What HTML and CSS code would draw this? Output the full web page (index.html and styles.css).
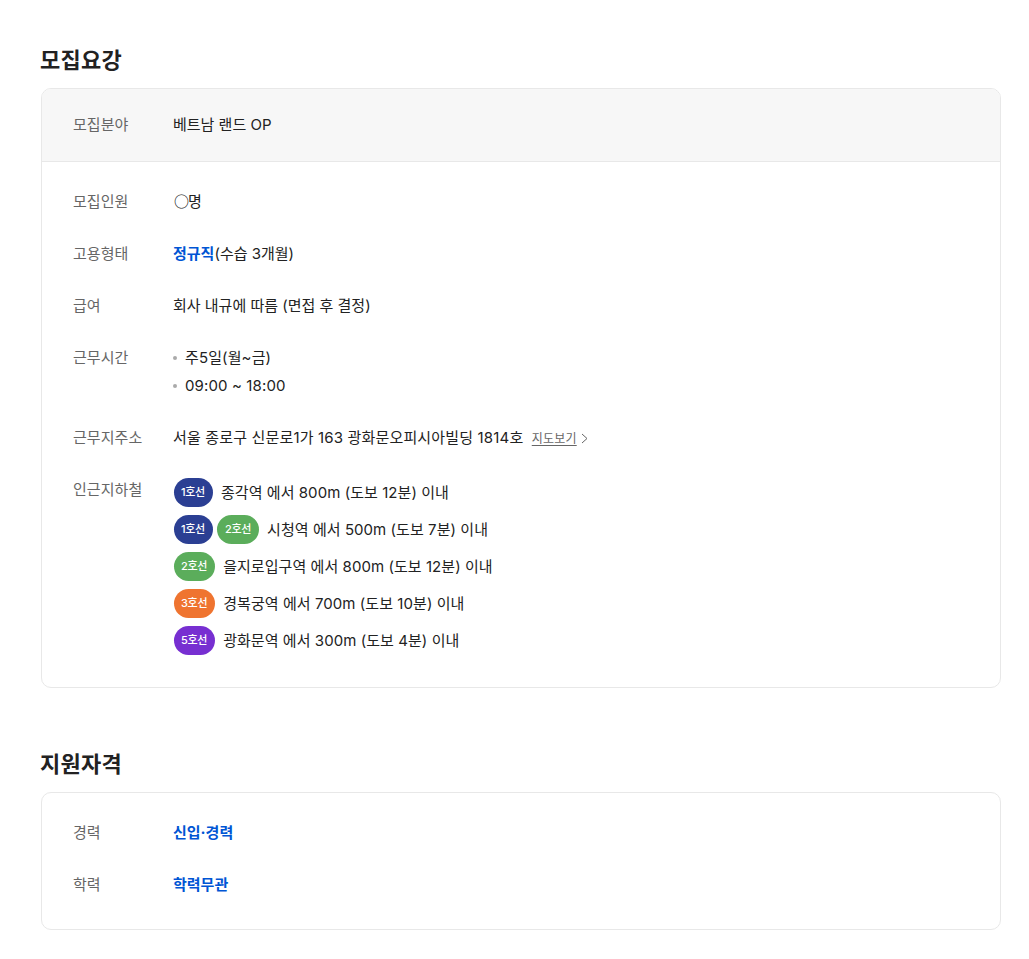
FILE: index.html
```html
<!DOCTYPE html>
<html lang="ko">
<head>
<meta charset="utf-8">
<title>모집요강</title>
<link rel="stylesheet" href="styles.css">
</head>
<body>
<main class="page">
  <section class="section">
    <h2 class="title">모집요강</h2>
    <div class="card">
      <dl class="head">
        <div class="row"><dt class="label">모집분야</dt><dd class="value">베트남 랜드 OP</dd></div>
      </dl>
      <dl class="body">
        <div class="row"><dt class="label">모집인원</dt><dd class="value"><span class="circle">○</span>명</dd></div>
        <div class="row"><dt class="label">고용형태</dt><dd class="value"><strong class="accent">정규직</strong>(수습 3개월)</dd></div>
        <div class="row"><dt class="label">급여</dt><dd class="value">회사 내규에 따름 (면접 후 결정)</dd></div>
        <div class="row"><dt class="label">근무시간</dt>
          <dd class="value">
            <ul class="bullets"><li>주5일(월~금)</li><li>09:00 ~ 18:00</li></ul>
          </dd>
        </div>
        <div class="row"><dt class="label">근무지주소</dt>
          <dd class="value addr">서울 종로구 신문로1가 163 광화문오피시아빌딩 1814호
            <a class="map" href="#"><span class="map-text">지도보기</span><svg class="chev" width="7" height="11" viewBox="0 0 7 11"><path d="M1 1l5 4.5L1 10" fill="none" stroke="#666" stroke-width="1"/></svg></a>
          </dd>
        </div>
        <div class="row"><dt class="label">인근지하철</dt>
          <dd class="value subways">
            <div class="sub"><span class="line l1">1호선</span><span class="st">종각역 에서 800m (도보 12분) 이내</span></div>
            <div class="sub"><span class="line l1">1호선</span><span class="line l2">2호선</span><span class="st">시청역 에서 500m (도보 7분) 이내</span></div>
            <div class="sub"><span class="line l2">2호선</span><span class="st">을지로입구역 에서 800m (도보 12분) 이내</span></div>
            <div class="sub"><span class="line l3">3호선</span><span class="st">경복궁역 에서 700m (도보 10분) 이내</span></div>
            <div class="sub"><span class="line l5">5호선</span><span class="st">광화문역 에서 300m (도보 4분) 이내</span></div>
          </dd>
        </div>
      </dl>
    </div>
  </section>
  <section class="section">
    <h2 class="title">지원자격</h2>
    <div class="card">
      <dl class="body">
        <div class="row"><dt class="label">경력</dt><dd class="value"><strong class="accent">신입·경력</strong></dd></div>
        <div class="row"><dt class="label">학력</dt><dd class="value"><strong class="accent">학력무관</strong></dd></div>
      </dl>
    </div>
  </section>
</main>
</body>
</html>
```
FILE: styles.css
```css
* { box-sizing: border-box; }
html, body { margin: 0; padding: 0; background: #fff; }
body {
  font-family: "Inter", "Noto Sans CJK KR", sans-serif;
  color: #222;
  font-size: 15px;
  line-height: 28px;
  letter-spacing: 0;
}
.page { padding: 43px 28px 29px 41px; display: flex; flex-direction: column; gap: 59px; }
.title {
  margin: 0 0 10px -1px;
  font-size: 22px;
  line-height: 35px;
  font-weight: 700;
  color: #222;
  letter-spacing: 0.25px;
}
.card { border: 1px solid #e8e8e8; border-radius: 10px; overflow: hidden; }
dl, dd, dt, ul { margin: 0; padding: 0; }
.head { background: #f7f7f7; border-bottom: 1px solid #e8e8e8; padding: 22px 31px; }
.body { padding: 26px 31px 30px; display: flex; flex-direction: column; gap: 24px; }
.row { display: flex; }
.label { width: 100px; flex: none; color: #666; letter-spacing: 0.05px; }
.value { flex: 1; min-width: 0; }
.accent { color: #0055d4; font-weight: 700; }
.circle { font-family: "Noto Sans CJK KR", sans-serif; font-weight: 500; line-height: 1; margin-left: 1px; letter-spacing: -0.9px; }
.bullets { list-style: none; letter-spacing: 0.12px; }
.bullets li { position: relative; padding-left: 12px; }
.bullets li::before {
  content: ""; position: absolute; left: 0; top: 12px;
  width: 4px; height: 4px; border-radius: 50%; background: #aaa;
}
.addr { letter-spacing: 0.16px; }
.map { margin-left: 4px; color: #666; font-size: 12px; line-height: 1; text-decoration: none; letter-spacing: 0.2px; }
.map-text { text-decoration: underline; text-underline-offset: 2px; }
.chev { margin-left: 4px; vertical-align: -1px; }
.subways { display: flex; flex-direction: column; gap: 8px; padding: 2px 0 2px 1px; }
.sub { display: flex; align-items: center; height: 29px; }
.line {
  height: 29px; border-radius: 15px; color: #fff; font-size: 11px; line-height: 29px; font-weight: 500;
  padding: 0 8px 0 7px; margin-right: 4px; letter-spacing: -0.3px; flex: none;
}
.line + .line { padding-left: 8px; }
.line + .st { margin-left: 4px; }
.st { letter-spacing: 0.06px; }
.l1 { background: #2b3f93; }
.l2 { background: #5bad5b; }
.l3 { background: #ef7430; }
.l5 { background: #772fd1; }
```
